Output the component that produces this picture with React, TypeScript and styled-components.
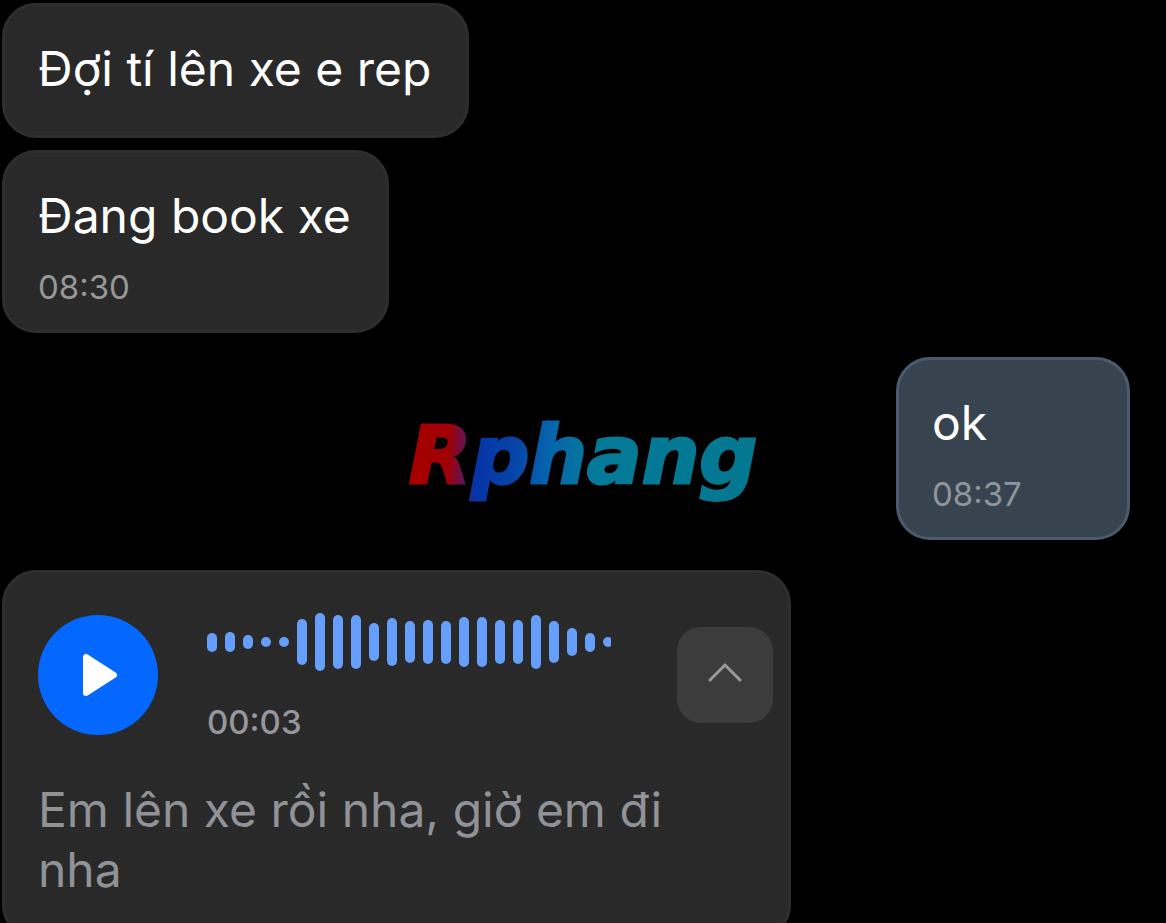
import React from "react";
import styled, { createGlobalStyle } from "styled-components";

const GlobalStyle = createGlobalStyle`
  *, *::before, *::after { box-sizing: border-box; }
  body {
    margin: 0;
    background: #000;
    font-family: Inter, "Liberation Sans", sans-serif;
  }
  button { font: inherit; }
`;

const Screen = styled.div`
  position: relative;
  height: 100vh;
  overflow: hidden;
  background: #000;
`;

const Thread = styled.main`
  display: flex;
  flex-direction: column;
  gap: 24px;
  padding: 3px 36px 0 2px;
`;

const Group = styled.section`
  display: flex;
  flex-direction: column;
  align-items: flex-start;
  gap: 12px;
`;

const Bubble = styled.article<{ $own?: boolean; $timed?: boolean }>`
  display: flex;
  flex-direction: column;
  gap: 21px;
  min-width: 234px;
  padding: 33px 35px ${(p) => (p.$timed ? 23 : 36)}px 33px;
  align-self: ${(p) => (p.$own ? "flex-end" : "flex-start")};
  border: 3px solid ${(p) => (p.$own ? "#4b5a6d" : "#2e2e2e")};
  border-radius: 34px;
  background: ${(p) => (p.$own ? "#37444f" : "#292929")};
  color: #fff;
`;

const Message = styled.p`
  margin: 0;
  font-size: 48px;
  line-height: 60px;
`;

const Time = styled.time<{ $own?: boolean }>`
  color: ${(p) => (p.$own ? "#8f959b" : "#979797")};
  font-size: 33px;
  line-height: 40px;
`;

const VoiceBubble = styled.article`
  width: 789px;
  max-width: 100%;
  margin-top: 6px;
  padding: 39px 15px 36px 33px;
  border: 3px solid #2e2e2e;
  border-radius: 34px;
  background: #292929;
`;

const Player = styled.div`
  display: flex;
  align-items: flex-start;
  padding-top: 3px;
`;

const PlayButton = styled.button`
  display: flex;
  align-items: center;
  justify-content: center;
  flex: none;
  width: 120px;
  height: 120px;
  padding: 0;
  border: 0;
  border-radius: 50%;
  background: #0468ff;
`;

const Track = styled.div`
  flex: 1;
  min-width: 0;
  padding: 0 66px 0 49px;
`;

const Wave = styled.div`
  display: flex;
  align-items: center;
  gap: 8px;
  height: 54px;
  width: 404px;
  max-width: 100%;
  overflow-x: clip;
`;

const Bar = styled.span<{ $height: number }>`
  flex: none;
  width: 10px;
  height: ${(p) => p.$height}px;
  border-radius: 5px;
  background: #659ffb;
`;

const Duration = styled.div`
  margin-top: 33px;
  color: #95979c;
  font-size: 33px;
  font-weight: 500;
  line-height: 40px;
`;

const CollapseButton = styled.button`
  display: flex;
  align-items: center;
  justify-content: center;
  flex: none;
  width: 96px;
  height: 96px;
  margin-top: 12px;
  padding: 0;
  border: 0;
  border-radius: 24px;
  background: #3c3c3c;
`;

const Transcript = styled.p`
  margin: 38px 0 0;
  padding-right: 48px;
  color: #909298;
  font-size: 48px;
  line-height: 60px;
`;

const Watermark = styled.div`
  position: absolute;
  inset: 0;
  display: flex;
  align-items: center;
  justify-content: center;
  pointer-events: none;
`;

const Wordmark = styled.text`
  font-family: "DejaVu Sans", sans-serif;
  font-size: 81px;
  font-style: italic;
  font-weight: 700;
`;

const levels = [
  19, 20, 14, 10, 10, 46, 58, 54, 54, 38, 48, 42, 44, 43, 50, 50, 44, 44, 54,
  42, 28, 19, 10,
];

const PlayIcon = () => (
  <svg width="40" height="44" viewBox="0 0 40 44" aria-hidden="true">
    <path
      d="M8 4v36L36 22Z"
      fill="#fff"
      stroke="#fff"
      strokeWidth="6"
      strokeLinejoin="round"
    />
  </svg>
);

const ChevronUp = () => (
  <svg width="36" height="28" viewBox="0 0 36 28" aria-hidden="true">
    <path
      d="m3 19 15-15 15 15"
      fill="none"
      stroke="#9a9a9d"
      strokeWidth="3"
      strokeLinecap="round"
      strokeLinejoin="miter"
    />
  </svg>
);

const Logo = () => (
  <svg width="400" height="120" viewBox="0 0 400 120">
    <defs>
      <linearGradient
        id="brand"
        gradientUnits="userSpaceOnUse"
        x1="28"
        y1="50"
        x2="372"
        y2="70"
      >
        <stop offset="0" stopColor="#a60000" />
        <stop offset="0.11" stopColor="#a00006" />
        <stop offset="0.16" stopColor="#5c1560" />
        <stop offset="0.19" stopColor="#0534a6" />
        <stop offset="0.3" stopColor="#0744a8" />
        <stop offset="0.4" stopColor="#0664ac" />
        <stop offset="0.53" stopColor="#047a98" />
        <stop offset="1" stopColor="#047890" />
      </linearGradient>
    </defs>
    <Wordmark x="26" y="81" fill="url(#brand)" stroke="url(#brand)" strokeWidth="3">
      Rphang
    </Wordmark>
  </svg>
);

export default function App() {
  return (
    <Screen>
      <GlobalStyle />
      <Thread>
        <Group>
          <Bubble>
            <Message>Đợi tí lên xe e rep</Message>
          </Bubble>
          <Bubble $timed>
            <Message>Đang book xe</Message>
            <Time>08:30</Time>
          </Bubble>
        </Group>
        <Bubble $own $timed>
          <Message>ok</Message>
          <Time $own>08:37</Time>
        </Bubble>
        <VoiceBubble>
          <Player>
            <PlayButton type="button" aria-label="Phát">
              <PlayIcon />
            </PlayButton>
            <Track>
              <Wave>
                {levels.map((level, i) => (
                  <Bar key={i} $height={level} />
                ))}
              </Wave>
              <Duration>00:03</Duration>
            </Track>
            <CollapseButton type="button" aria-label="Thu gọn">
              <ChevronUp />
            </CollapseButton>
          </Player>
          <Transcript>Em lên xe rồi nha, giờ em đi nha</Transcript>
        </VoiceBubble>
      </Thread>
      <Watermark>
        <Logo />
      </Watermark>
    </Screen>
  );
}
